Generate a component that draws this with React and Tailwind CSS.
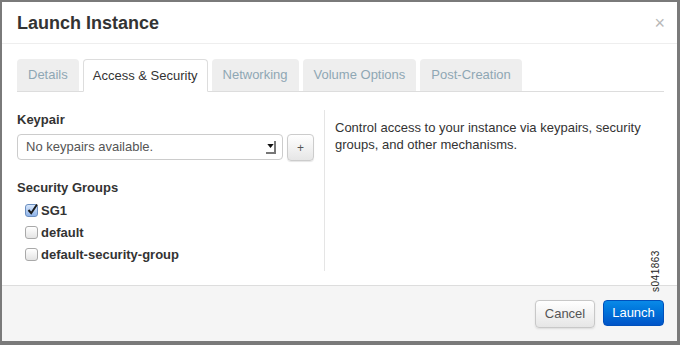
import React from 'react';

const tabs = ['Details', 'Access & Security', 'Networking', 'Volume Options', 'Post-Creation'];

function Checkbox({ checked }) {
  if (checked) {
    return (
      <span className="relative w-[13px] h-[13px] rounded-[3px] border border-[#6b8fc0] bg-gradient-to-b from-[#d6e6fb] to-[#8fb3e8] shrink-0">
        <svg viewBox="0 0 13 13" className="absolute -top-[2px] left-0 w-[13px] h-[13px]">
          <path d="M2.5 7 L5.2 10.2 L11 1.5" fill="none" stroke="#1a1a1a" strokeWidth="2" />
        </svg>
      </span>
    );
  }
  return <span className="w-[13px] h-[13px] rounded-[3px] border border-[#a9a9a9] bg-gradient-to-b from-white to-[#e4e4e4] shrink-0" />;
}

export default function App() {
  return (
    <div className="w-[680px] h-[345px] bg-[#7a7a7a] pt-[2px] pl-[2px] pr-[3px] pb-[4px]" style={{ fontFamily: '"Liberation Sans", Arial, sans-serif' }}>
      <div className="relative h-full bg-white flex flex-col">
        {/* header */}
        <div className="h-[42px] border-b border-[#eeeeee] flex items-center justify-between pl-[15px] pr-[12px] shrink-0">
          <h1 className="text-[18px] font-bold text-[#333] leading-none">Launch Instance</h1>
          <span className="text-[#b8b8b8] text-[18px] leading-none">×</span>
        </div>

        {/* body */}
        <div className="flex-1 pl-[15px] pr-[13px] pt-[15px]">
          <div className="flex items-end gap-[4px] border-b border-[#dddddd] h-[33px]">
            {tabs.map((t) =>
              t === 'Access & Security' ? (
                <div key={t} className="h-[33px] px-[9px] flex items-center bg-white border border-[#dddddd] border-b-white rounded-t-[4px] text-[13px] text-[#333] -mb-px">
                  {t}
                </div>
              ) : (
                <div key={t} className="h-[32px] px-[11px] flex items-center bg-[#eeeeee] rounded-t-[4px] text-[13px] text-[#8ea7b4]">
                  {t}
                </div>
              )
            )}
          </div>

          <div className="flex mt-[18px]">
            <div className="w-[308px] pr-[9px] border-r border-[#e5e5e5] h-[161px] shrink-0">
              <div className="text-[13px] font-bold text-[#333] leading-none pt-[3px]">Keypair</div>
              <div className="flex gap-[4px] mt-[8px]">
                <div className="w-[266px] h-[26px] border border-[#cccccc] rounded-[4px] flex items-center justify-between pl-[8px] pr-[6px] text-[13px] text-[#555]">
                  <span>No keypairs available.</span>
                  <span className="w-[10px] h-[13px] bg-white border-r-2 border-b-2 border-[#777] flex items-center justify-center">
                    <svg viewBox="0 0 8 5" className="w-[7px] h-[4px]">
                      <path d="M0 0 L8 0 L4 5 Z" fill="#111" />
                    </svg>
                  </span>
                </div>
                <div className="w-[27px] h-[27px] border border-[#cccccc] rounded-[4px] bg-gradient-to-b from-white to-[#e6e6e6] flex items-center justify-center text-[12px] text-[#555] shadow-[0_1px_1px_rgba(0,0,0,0.1)]">
                  +
                </div>
              </div>
              <div className="text-[13px] font-bold text-[#333] leading-none mt-[20px]">Security Groups</div>
              <div className="flex flex-col gap-[7px] mt-[9px] pl-[8px]">
                {[
                  ['SG1', true],
                  ['default', false],
                  ['default-security-group', false],
                ].map(([label, c]) => (
                  <label key={label} className="flex items-center gap-[3px] h-[15px] text-[13px] font-bold text-[#333]">
                    <Checkbox checked={c} />
                    <span>{label}</span>
                  </label>
                ))}
              </div>
            </div>
            <div className="pl-[10px] pt-[9px] text-[13px] leading-[17px] text-[#333] w-[325px]">
              Control access to your instance via keypairs, security groups, and other mechanisms.
            </div>
          </div>
        </div>

        {/* footer */}
        <div className="h-[56px] bg-[#f5f5f5] border-t border-[#dddddd] flex items-start justify-end gap-[8px] pt-[14px] pr-[13px] shrink-0">
          <button className="w-[60px] h-[28px] border border-[#c8c8c8] rounded-[4px] bg-gradient-to-b from-white to-[#e6e6e6] text-[13px] text-[#555] shadow-[0_1px_2px_rgba(0,0,0,0.1)]">
            Cancel
          </button>
          <button className="w-[61px] h-[26px] rounded-[4px] bg-gradient-to-b from-[#0a8ae8] to-[#0054c8] border border-[#0050bb] text-[13px] text-white">
            Launch
          </button>
        </div>

        <span className="absolute left-[633px] top-[264px] -rotate-90 origin-center text-[10px] text-[#222] leading-none tracking-[0.5px]">
          s041863
        </span>
      </div>
    </div>
  );
}
